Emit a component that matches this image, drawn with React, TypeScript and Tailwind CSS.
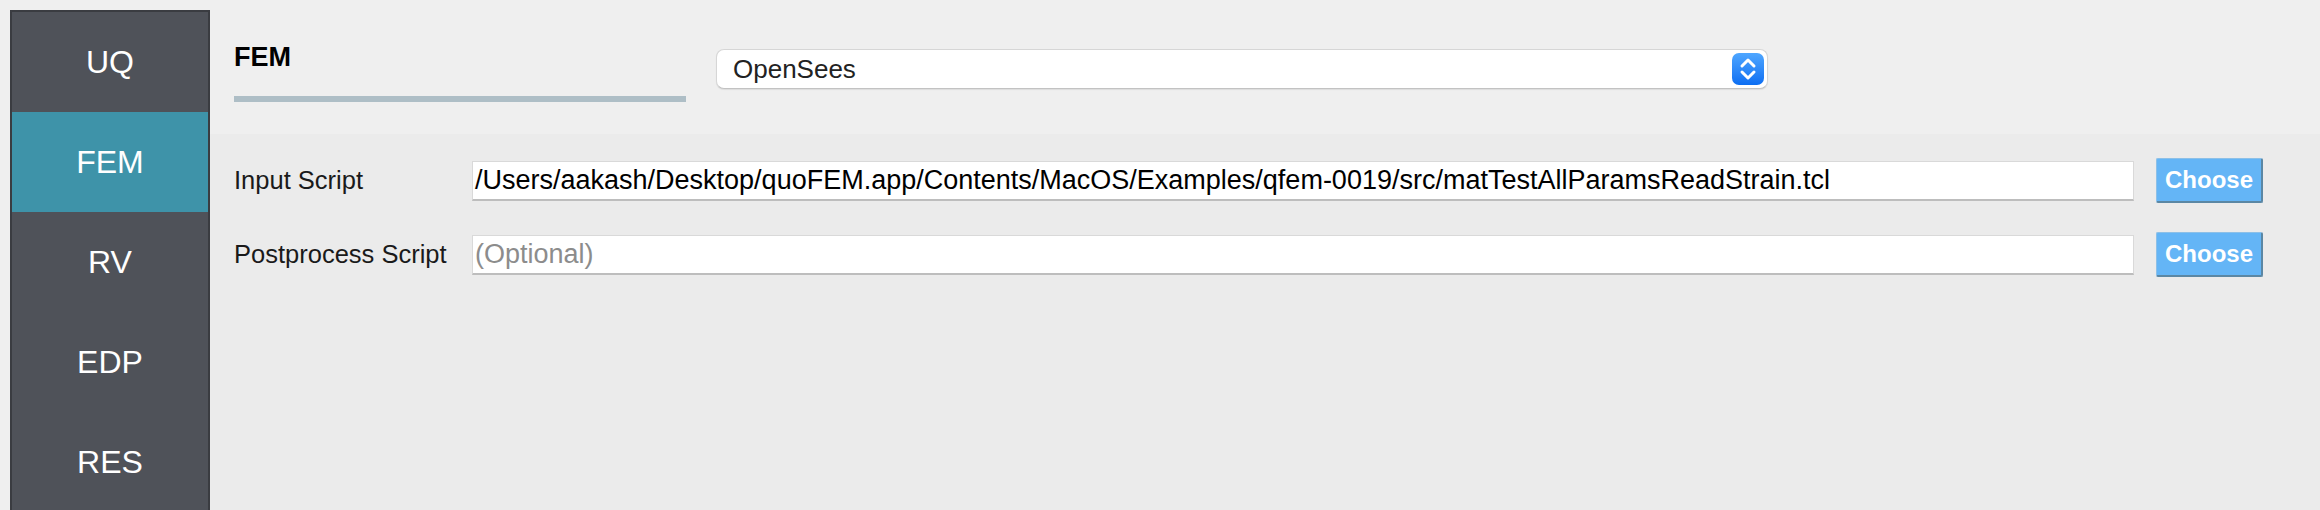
import React from 'react';

const navItems = ['UQ', 'FEM', 'RV', 'EDP', 'RES'];

function Stepper() {
  return (
    <div className="flex h-[32px] w-[32px] items-center justify-center rounded-[7px] bg-gradient-to-b from-[#4ea6ff] to-[#0b6ef2]">
      <svg width="32" height="32" viewBox="0 0 32 32" fill="none">
        <path d="M10 13 L16 7 L22 13" stroke="white" strokeWidth="3" strokeLinecap="round" strokeLinejoin="round" />
        <path d="M10 19 L16 25 L22 19" stroke="white" strokeWidth="3" strokeLinecap="round" strokeLinejoin="round" />
      </svg>
    </div>
  );
}

function FileRow({ label, value, placeholder }: { label: string; value?: string; placeholder?: string }) {
  return (
    <div className="flex h-[45px] items-center">
      <div className="w-[238px] shrink-0 text-[25.5px] leading-none text-[#1a1a1a]">{label}</div>
      <div className="flex h-[40px] flex-1 items-center border border-[#d9d9d9] border-b-2 border-b-[#bdbdbd] bg-white pl-[2px]">
        {value ? (
          <span className="whitespace-nowrap text-[27px] leading-none text-black">{value}</span>
        ) : (
          <span className="whitespace-nowrap text-[27px] leading-none text-[#8c8c8c]">{placeholder}</span>
        )}
      </div>
      <button className="ml-[22px] flex h-[45px] w-[107px] items-center justify-center rounded-[2px] border border-t-[#8cc0e8] border-l-[#8cc0e8] border-r-2 border-b-2 border-r-[#5b87a4] border-b-[#5b87a4] bg-[#64b5f6] text-[24px] font-bold leading-none text-white">
        Choose
      </button>
    </div>
  );
}

export default function App() {
  return (
    <div
      className="flex h-[510px] w-[2320px] overflow-hidden bg-[#efefef]"
      style={{ fontFamily: '"Liberation Sans", Arial, sans-serif' }}
    >
      <div className="pl-[10px] pt-[10px]">
        <nav className="h-[520px] w-[200px] border-x-2 border-t-2 border-[#3a3c41] bg-[#4f5259]">
          {navItems.map((item) => (
            <div
              key={item}
              className={
                item === 'FEM'
                  ? 'flex h-[100px] items-center justify-center bg-[#3e93a9] text-[32px] text-white'
                  : 'flex h-[100px] items-center justify-center text-[32px] text-white'
              }
            >
              {item}
            </div>
          ))}
        </nav>
      </div>

      <div className="flex flex-1 flex-col">
        <section className="flex h-[134px] shrink-0 items-start bg-[#efefef] pl-[24px]">
          <div className="mt-[44px] w-[452px]">
            <h1 className="h-[27px] text-[27px] font-bold leading-[27px] text-black">FEM</h1>
            <div className="mt-[25px] h-[6px] bg-[#aebec6]" />
          </div>
          <div className="ml-[30px] mt-[49px] flex h-[40px] w-[1052px] items-center justify-between rounded-[8px] border border-[#d6d6d6] border-b-[#c2c2c2] bg-white pl-[16px] pr-[3px] shadow-[0_1px_1px_rgba(0,0,0,0.08)]">
            <span className="text-[26px] leading-none text-[#222]">OpenSees</span>
            <Stepper />
          </div>
        </section>

        <section className="flex flex-1 flex-col gap-[29px] bg-[#ebebeb] pl-[24px] pr-[57px] pt-[24px]">
          <FileRow
            label="Input Script"
            value="/Users/aakash/Desktop/quoFEM.app/Contents/MacOS/Examples/qfem-0019/src/matTestAllParamsReadStrain.tcl"
          />
          <FileRow label="Postprocess Script" placeholder="(Optional)" />
        </section>
      </div>
    </div>
  );
}
